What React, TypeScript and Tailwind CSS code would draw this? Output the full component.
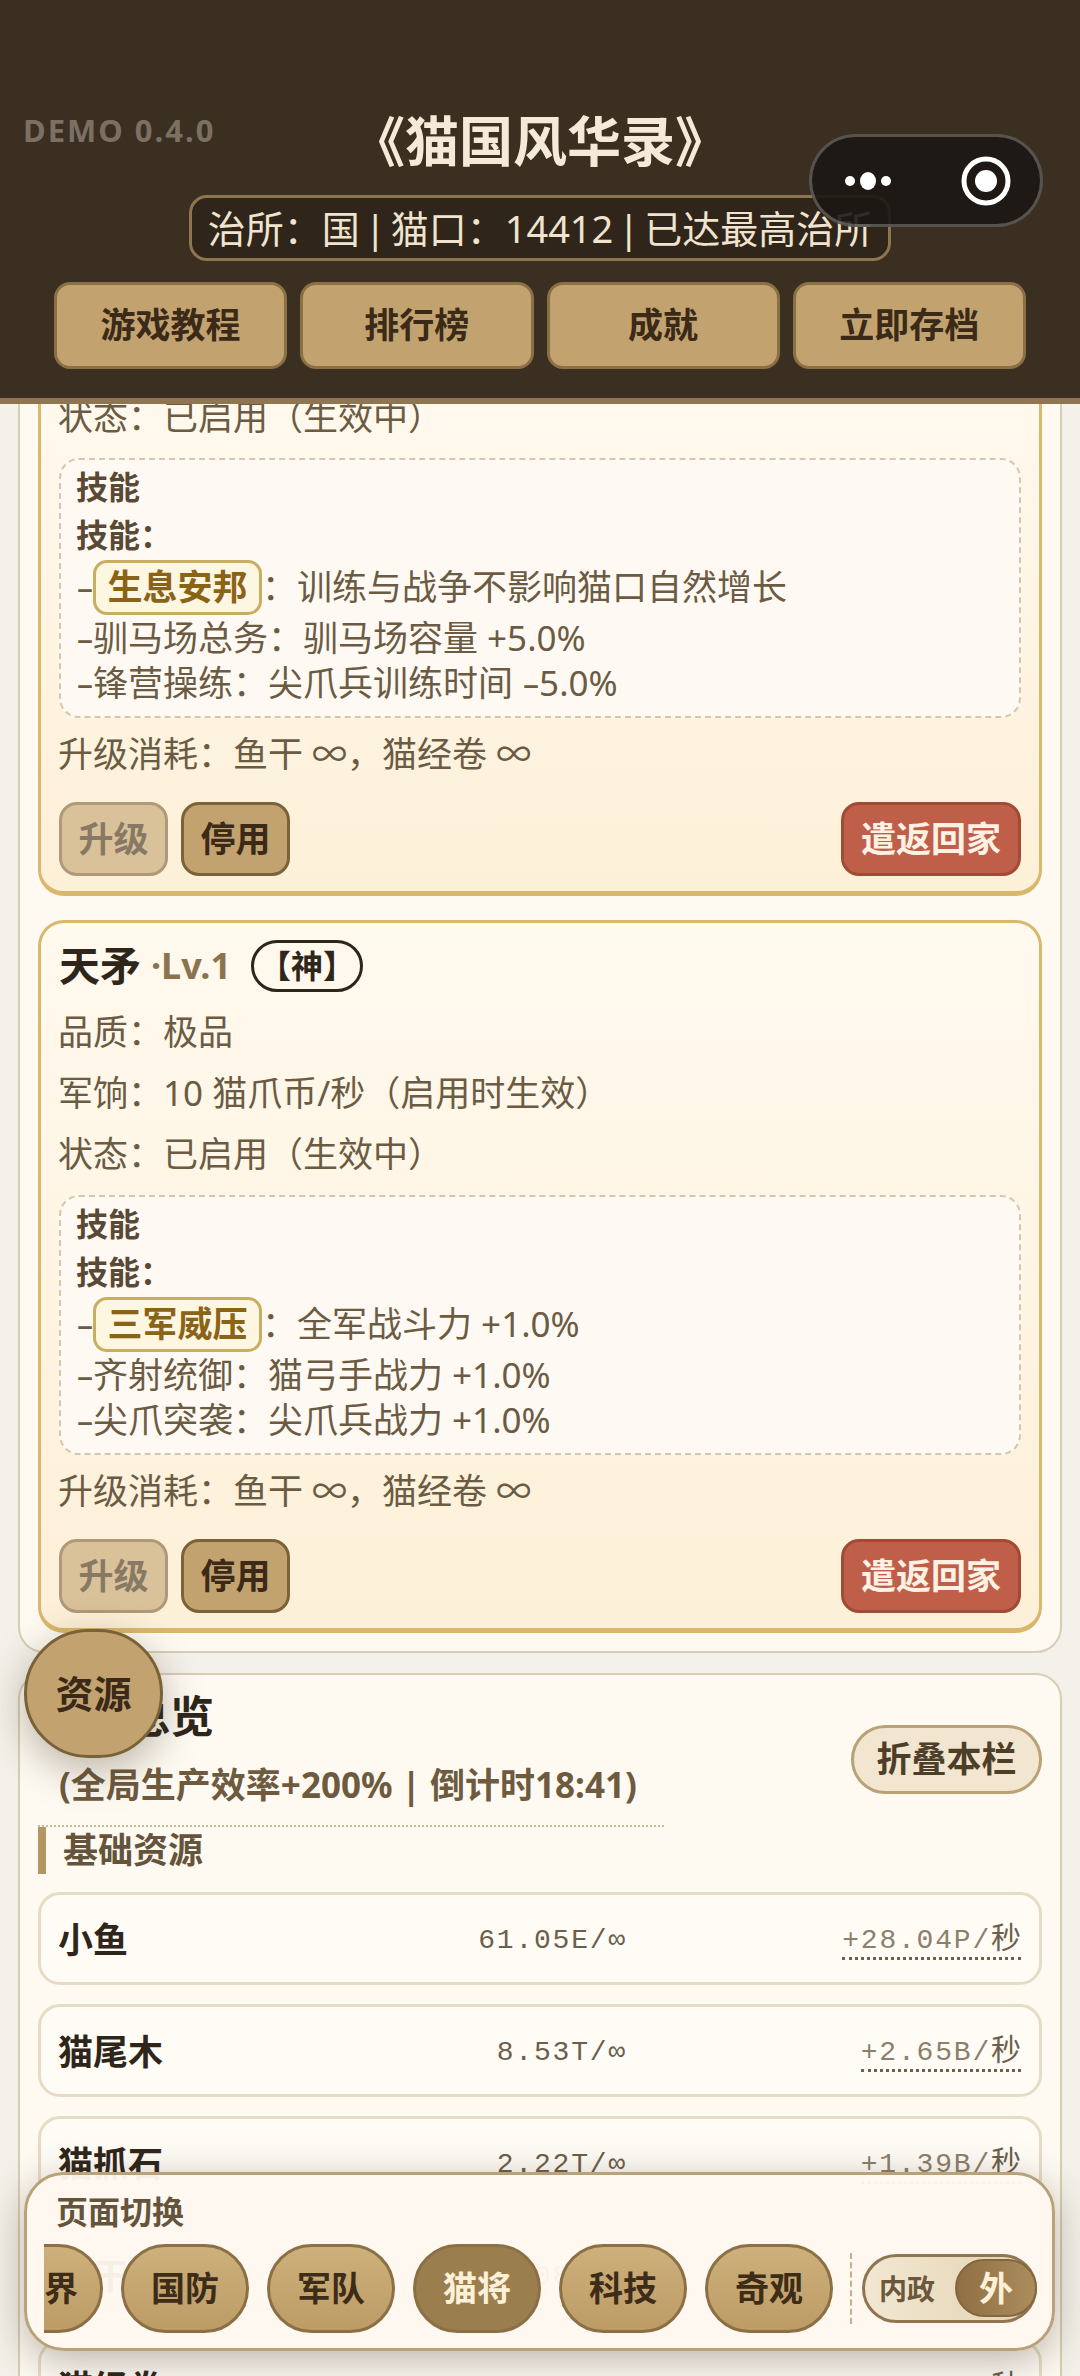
const FONT = "font-['Noto_Sans','Noto_Sans_CJK_SC',sans-serif]";

type Skill = { tag: string; text: string; lines: string[] };

// the hyphen in the game's font is wider than Noto's
function Dash() {
  return <span className="inline-block w-[17px] origin-left scale-x-[1.6]">-</span>;
}

function InfoRow({ children }: { children: React.ReactNode }) {
  return <div className="-ml-[1px] flex h-[61px] items-center text-[35px] text-[#6c5b43]">{children}</div>;
}

function SkillLine({ text }: { text: string }) {
  const parts = text.split("-");
  return (
    <div className="flex h-[45px] items-center whitespace-pre text-[35px]">
      {parts.map((p, i) => (
        <span key={i} className="flex items-center whitespace-pre">
          {i > 0 && <Dash />}
          {p}
        </span>
      ))}
    </div>
  );
}

function GeneralCard({ name, rows, skill }: { name?: string; rows: string[]; skill: Skill }) {
  return (
    <div className="rounded-[26px] border-[3px] border-b-[5px] border-[#d9b86d] bg-gradient-to-b from-[#fff9ee] to-[#fdf0d8] px-[18px] pb-[15px] pt-[17px]">
      {name && (
        <div className="mb-[10px] flex h-[52px] items-center">
          <span className="text-[41px] font-bold text-[#2f261b]">{name}</span>
          <span className="ml-[10px] text-[36px] font-bold text-[#8b7350]">·Lv.1</span>
          <span className="ml-[20px] flex h-[52px] w-[112px] items-center justify-center rounded-full border-[3px] border-[#2f261b] text-[32px] font-bold text-[#2f261b]">
            【神】
          </span>
        </div>
      )}
      {rows.map((r) => (
        <InfoRow key={r}>{r}</InfoRow>
      ))}
      <div className="mt-[10px] h-[260px] rounded-[20px] border-2 border-dashed border-[#d5c8aa] bg-[#fefaf3] px-[15px] pt-[3px] text-[#6c5b43]">
        <div className="flex h-[48px] items-center text-[32px] font-bold text-[#5a4a35]">技能</div>
        <div className="flex h-[48px] items-center text-[32px] font-bold text-[#5a4a35]">技能：</div>
        <div className="flex h-[57px] items-center text-[35px]">
          <Dash />
          <span className="flex h-[55px] w-[169px] items-center justify-center rounded-[14px] border-[3px] border-[#c9ae5f] bg-[#fdf6e0] font-bold text-[#8a6316]">
            {skill.tag}
          </span>
          ：{skill.text}
        </div>
        {skill.lines.map((l) => (
          <SkillLine key={l} text={l} />
        ))}
      </div>
      <div className="mt-[6px]">
        <InfoRow>升级消耗：鱼干 ∞，猫经卷 ∞</InfoRow>
      </div>
      <div className="mt-[17px] flex items-center gap-[13px] text-[35px] font-bold">
        <button className="h-[74px] w-[109px] rounded-[18px] border-[3px] border-[#7b6238] bg-[#c2a26f] text-[#3b2a17] opacity-60">
          升级
        </button>
        <button className="h-[74px] w-[109px] rounded-[18px] border-[3px] border-[#7b6238] bg-[#c2a26f] text-[#3b2a17]">
          停用
        </button>
        <button className="ml-auto h-[74px] w-[180px] rounded-[18px] border-[3px] border-[#a14b37] bg-[#bf5f49] text-[#fdf1e4]">
          遣返回家
        </button>
      </div>
    </div>
  );
}

const RESOURCES = [
  { name: "小鱼", value: "61.05E/∞", rate: "+28.04P/" },
  { name: "猫尾木", value: "8.53T/∞", rate: "+2.65B/" },
  { name: "猫抓石", value: "2.22T/∞", rate: "+1.39B/" },
  { name: "鱼干", value: "1.08T/∞", rate: "+1.02B/" },
  { name: "猫经卷", value: "960.5B/∞", rate: "+820.4M/" },
];

function ResourceRow({ name, value, rate }: { name: string; value: string; rate: string }) {
  return (
    <div className="grid h-[93px] grid-cols-[568px_1fr] items-center rounded-[22px] border-[3px] border-[#e6dcc5] bg-[#fffcf6] px-[18px] pt-[4px]">
      <div className="flex items-center justify-between">
        <span className="-ml-[1px] text-[35px] font-bold text-[#2f261b]">{name}</span>
        <span className="font-['Liberation_Mono','Noto_Sans_CJK_SC',monospace] text-[28px] tracking-[1.8px] text-[#6c5f4c]">
          {value}
        </span>
      </div>
      <div className="text-right">
        <span className="border-b-[3px] border-dotted border-[#6c5f4c] pb-[1px] font-['Liberation_Mono','Noto_Sans_CJK_SC',monospace] text-[28px] tracking-[1.8px] text-[#8c7f6c]">
          {rate}
          <span className="text-[30px] tracking-normal text-[#6c5f4c]">秒</span>
        </span>
      </div>
    </div>
  );
}

const TABS = ["界", "国防", "军队", "猫将", "科技", "奇观"];

export default function App() {
  return (
    <div className={`relative flex h-[2376px] w-[1080px] flex-col overflow-hidden bg-[#f4f1ea] ${FONT}`}>
      <header className="relative z-10 h-[404px] shrink-0 border-b-[6px] border-[#8f7650] bg-[#3b2f22] pt-[111px]">
        <div className="absolute left-[23px] top-[107px] text-[31px] font-bold tracking-[2px] text-[#7b7062]">DEMO 0.4.0</div>
        <div className="text-center text-[54px] font-bold leading-[60px] text-[#f5ead8]">《猫国风华录》</div>
        <div className="mx-auto mt-[24px] flex h-[66px] w-[702px] items-center justify-center rounded-[18px] border-[3px] border-[#8c7650] bg-[#2f251a] text-[38px] text-[#f0e4cf]">
          治所：国<span className="mx-[5px]">|</span>猫口：14412<span className="mx-[5px]">|</span>已达最高治所
        </div>
        <div className="mt-[21px] grid grid-cols-4 gap-[13px] px-[54px]">
          {["游戏教程", "排行榜", "成就", "立即存档"].map((b) => (
            <button
              key={b}
              className="h-[87px] rounded-[16px] border-[3px] border-[#8b7045] bg-[#c2a26f] text-[35px] font-bold text-[#3b2a17]"
            >
              {b}
            </button>
          ))}
        </div>
        {/* wechat capsule */}
        <div className="absolute left-[809px] top-[134px] flex h-[93px] w-[234px] items-center rounded-full border-[3px] border-white/25 bg-[#1c1713]/90">
          <svg width="115" height="60" viewBox="0 0 115 60" className="shrink-0">
            <circle cx="38" cy="30" r="5" fill="#fff" />
            <ellipse cx="56" cy="30" rx="8" ry="9" fill="#fff" />
            <circle cx="74" cy="30" r="5" fill="#fff" />
          </svg>
          <div className="h-[60px] w-px bg-white/30" />
          <svg width="115" height="60" viewBox="0 0 115 60" className="shrink-0">
            <circle cx="59" cy="30" r="22" fill="none" stroke="#fff" strokeWidth="5" />
            <circle cx="59" cy="30" r="11" fill="#fff" />
          </svg>
        </div>
      </header>

      <main className="flex-1 overflow-hidden px-[18px]">
        <section className="-mt-[39px] flex flex-col gap-[24px] rounded-b-[26px] border-2 border-[#d8cdb5] bg-[#fefaf2] px-[18px] pb-[18px]">
          <GeneralCard
            rows={["状态：已启用（生效中）"]}
            skill={{
              tag: "生息安邦",
              text: "训练与战争不影响猫口自然增长",
              lines: ["-驯马场总务：驯马场容量 +5.0%", "-锋营操练：尖爪兵训练时间 -5.0%"],
            }}
          />
          <GeneralCard
            name="天矛"
            rows={["品质：极品", "军饷：10 猫爪币/秒（启用时生效）", "状态：已启用（生效中）"]}
            skill={{
              tag: "三军威压",
              text: "全军战斗力 +1.0%",
              lines: ["-齐射统御：猫弓手战力 +1.0%", "-尖爪突袭：尖爪兵战力 +1.0%"],
            }}
          />
        </section>

        <section className="mt-[20px] rounded-[26px] border-2 border-[#d8cdb5] bg-[#fefaf2] px-[18px]">
          <div className="flex justify-between">
            <div className="h-[152px] w-[626px] border-b-2 border-dotted border-[#c9bb9b] pt-[11px]">
              <div className="flex h-[60px] items-center text-[44px] font-bold text-[#2f261b]">资源总览</div>
              <div className="mt-[14px] flex h-[50px] items-center pl-[21px] text-[35px] font-bold text-[#6e5a3f]">
                (全局生产效率+200% | 倒计时18:41)
              </div>
            </div>
            <button className="mt-[50px] h-[69px] w-[191px] rounded-full border-[3px] border-[#b9a275] bg-[#f3e6d0] text-[35px] font-bold text-[#4d3e2a]">
              折叠本栏
            </button>
          </div>
          <div className="flex h-[47px] items-center border-l-[8px] border-[#b39763] pl-[17px] text-[35px] font-bold text-[#65543c]">
            基础资源
          </div>
          <div className="mt-[18px] flex flex-col gap-[19px]">
            {RESOURCES.map((r) => (
              <ResourceRow key={r.name} {...r} />
            ))}
          </div>
        </section>
      </main>

      {/* floating resource ball */}
      <button className="absolute left-[24px] top-[1629px] z-10 h-[129px] w-[139px] rounded-full border-[3px] border-[#7a6238] bg-[#c2a26f] text-[38px] font-bold text-[#3b2a17] shadow-[0_12px_40px_rgba(60,45,25,0.35)]">
        资源
      </button>

      {/* bottom page switcher */}
      <nav className="absolute left-[24px] top-[2172px] z-10 h-[179px] w-[1031px] rounded-[40px] border-[3px] border-[#b7a27a] bg-[#fef8ef]/96 pl-[17px] shadow-[0_10px_40px_rgba(60,45,25,0.35)]">
        <div className="flex h-[69px] items-center pl-[12px] pt-[5px] text-[32px] font-bold text-[#65543c]">页面切换</div>
        <div className="flex items-center">
          <div className="flex w-[794px] shrink-0 gap-[18px] overflow-hidden">
            {TABS.map((t, i) => (
              <button
                key={t}
                className={`h-[89px] shrink-0 rounded-full border-[3px] border-[#8b7045] text-[34px] font-bold ${
                  i === 0 ? "-ml-[69px] w-[128px] pl-[44px]" : "w-[128px]"
                } ${
                  t === "猫将"
                    ? "bg-[#9b7e4e] text-[#fdf0d8]"
                    : "bg-gradient-to-b from-[#cdb07b] to-[#bd9c66] text-[#3d2c17]"
                }`}
              >
                {t}
              </button>
            ))}
          </div>
          <div className="ml-[12px] h-[71px] border-l-2 border-dashed border-[#c4b088]" />
          <div className="relative ml-[10px] flex h-[69px] w-[175px] items-center rounded-full border-[3px] border-[#8f7650] bg-gradient-to-r from-[#f1e7d3] to-[#e4d3b0] pl-[14px] text-[28px] font-bold text-[#6a573c]">
            内政
            <span className="absolute -right-[3px] top-[2px] flex h-[58px] w-[82px] items-center justify-center rounded-full border-2 border-[#84683d] bg-gradient-to-r from-[#8f6f43] to-[#ac8d5e] text-[34px] text-[#fdf0d8]">
              外
            </span>
          </div>
        </div>
      </nav>
    </div>
  );
}
